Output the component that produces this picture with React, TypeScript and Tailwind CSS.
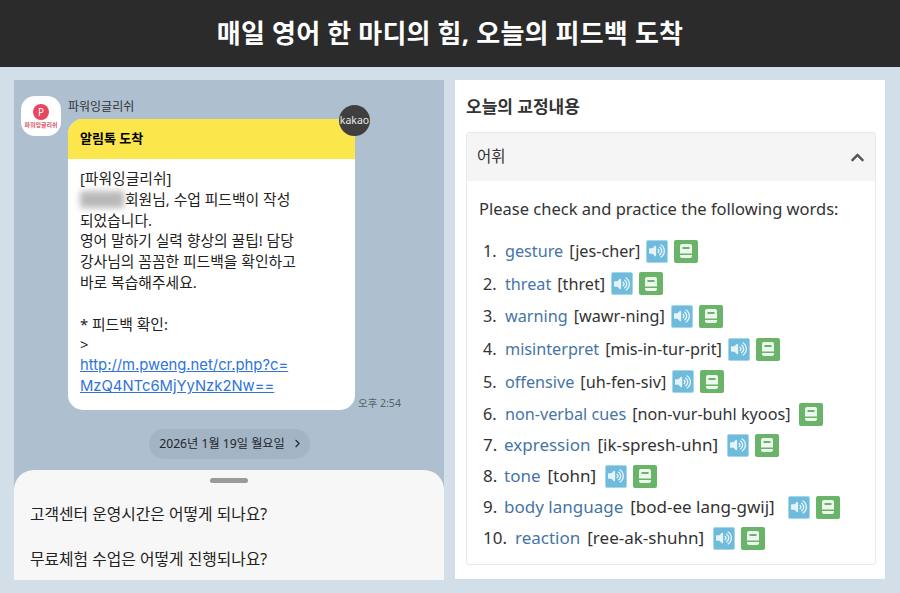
import { FaVolumeUp, FaChevronUp } from "react-icons/fa";
import { ChevronRight } from "lucide-react";

const KR = "font-['Noto_Sans','Noto_Sans_CJK_KR',sans-serif]";

interface IWord {
  word: string;
  reading: string;
  numberWidth: string;
}

const firstWords: IWord[] = [
  { word: "gesture", reading: "[jes-cher]", numberWidth: "w-[22px]" },
  { word: "threat", reading: "[thret]", numberWidth: "w-[22px]" },
  { word: "warning", reading: "[wawr-ning]", numberWidth: "w-[22px]" },
  { word: "misinterpret", reading: "[mis-in-tur-prit]", numberWidth: "w-[22px]" },
  { word: "offensive", reading: "[uh-fen-siv]", numberWidth: "w-[22px]" },
  { word: "non-verbal cues", reading: "[non-vur-buhl kyoos]", numberWidth: "w-[22px]" },
];

const secondWords: IWord[] = [
  { word: "expression", reading: "[ik-spresh-uhn]", numberWidth: "w-[21px]" },
  { word: "tone", reading: "[tohn]", numberWidth: "w-[21px]" },
  { word: "body language", reading: "[bod-ee lang-gwij]", numberWidth: "w-[21px]" },
  { word: "reaction", reading: "[ree-ak-shuhn]", numberWidth: "w-[32px]" },
];

function BookIcon() {
  return (
    <svg width="12" height="14" viewBox="0 0 12 14" fill="none">
      <rect x="0" y="0" width="12" height="14" rx="2" fill="#eef7ee" />
      <rect x="2.5" y="3" width="7" height="2" fill="#6ab469" />
      <rect x="0" y="9.5" width="12" height="1.5" fill="#6ab469" />
    </svg>
  );
}

function SoundButton({ className }: { className: string }) {
  return (
    <span
      className={`${className} flex h-[23px] w-[22px] items-center justify-center rounded-[2px] border border-[#a6d6ea] bg-[#6fbbdc] text-[#e6f4fa]`}
    >
      <FaVolumeUp size={16} />
    </span>
  );
}

function FirstRow({ item, index }: { item: IWord; index: number }) {
  const noSound = item.word === "non-verbal cues";
  return (
    <li className="flex h-[32.6px] items-center text-[16.2px]">
      <span className={`${item.numberWidth} shrink-0`}>{index}.</span>
      <span className="text-[#4674a6]">{item.word}</span>
      <span className="ml-[6px]">{item.reading}</span>
      {!noSound && <SoundButton className="ml-[6px]" />}
      <span
        className={`${noSound ? "ml-[8px]" : "ml-[6px]"} flex h-[23px] w-[24px] items-center justify-center rounded-[2px] bg-[#6ab469]`}
      >
        <BookIcon />
      </span>
    </li>
  );
}

function SecondRow({ item, index }: { item: IWord; index: number }) {
  return (
    <li className="flex h-[31px] items-center text-[17px]">
      <span className={`${item.numberWidth} shrink-0`}>{index}.</span>
      <span className="text-[#4674a6]">{item.word}</span>
      <span className="ml-[7px]">{item.reading}</span>
      <SoundButton className={item.word === "body language" ? "ml-[13px]" : "ml-[9px]"} />
      <span className="ml-[6px] flex h-[23px] w-[24px] items-center justify-center rounded-[2px] bg-[#6ab469]">
        <BookIcon />
      </span>
    </li>
  );
}

function ChatPanel() {
  return (
    <section className="relative flex h-[500px] w-[430px] flex-col overflow-hidden bg-[#aec0cf]">
      <div className="relative flex flex-1 flex-col">
        <div className="flex pl-[7px] pt-[16px]">
          <div className="flex h-[40px] w-[40px] flex-col items-center justify-center rounded-[14px] bg-white">
            <span className="flex h-[16px] w-[16px] items-center justify-center rounded-full bg-[#e8455f] text-[10px] leading-none text-white">
              P
            </span>
            <span className="mt-[2px] text-[6px] font-bold leading-none text-[#d8566c]">파워잉글리쉬</span>
          </div>
          <div className="ml-[7px]">
            <div className="h-[23px] text-[12px] leading-[22px] text-[#2f3338]">파워잉글리쉬</div>
            <div className="flex items-end">
              <div className="w-[287px] overflow-hidden rounded-[15px] bg-white">
                <div className="flex h-[40px] items-center bg-[#fbe64c] pl-[12px] text-[13px] font-bold text-black">
                  알림톡 도착
                </div>
                <div className="px-[12px] pt-[9px] pb-[13px] text-[14.8px] leading-[20.8px] text-[#222]">
                  <div>[파워잉글리쉬]</div>
                  <div className="flex items-center">
                    <span className="mr-[1px] h-[17px] w-[44px] bg-[#9b9b9b] opacity-70 blur-[3px]" />
                    회원님, 수업 피드백이 작성
                  </div>
                  <div>되었습니다.</div>
                  <div>영어 말하기 실력 향상의 꿀팁! 담당</div>
                  <div>강사님의 꼼꼼한 피드백을 확인하고</div>
                  <div>바로 복습해주세요.</div>
                  <div className="h-[20.8px]" />
                  <div>* 피드백 확인:</div>
                  <div>&gt;</div>
                  <div className="font-['Inter',sans-serif] text-[#2f74d8] underline">http://m.pweng.net/cr.php?c=</div>
                  <div className="font-['Inter',sans-serif] text-[#2f74d8] underline">MzQ4NTc6MjYyNzk2Nw==</div>
                </div>
              </div>
              <span className="ml-[3px] text-[10.5px] leading-[14px] text-[#555f68]">오후 2:54</span>
            </div>
          </div>
        </div>
        <div className="mt-[19px] flex justify-center">
          <div className="flex h-[30px] w-[161px] items-center justify-center gap-[6px] rounded-full bg-[#a3b5c4] pl-[5px] text-[12.2px] text-[#22262a]">
            2026년 1월 19일 월요일
            <ChevronRight size={13} />
          </div>
        </div>
      </div>
      <div className="absolute left-[325px] top-[25px] flex h-[31px] w-[31px] items-center justify-center rounded-full bg-[#3f3f3f] text-[10.5px] text-[#e8e8e8]">
        kakao
      </div>
      <div className="h-[110px] rounded-t-[20px] bg-[#f7f7f7] pl-[16px]">
        <div className="ml-[180px] mt-[8px] h-[5px] w-[38px] rounded-full bg-[#9a9a9a]" />
        <div className="mt-[19px] text-[15.8px] leading-[24px] text-[#222]">고객센터 운영시간은 어떻게 되나요?</div>
        <div className="mt-[21px] text-[15.8px] leading-[24px] text-[#222]">무료체험 수업은 어떻게 진행되나요?</div>
      </div>
    </section>
  );
}

function FeedbackPanel() {
  return (
    <section className="h-[499px] w-[430px] bg-white pl-[11px] pr-[9px]">
      <h2 className="flex h-[52px] items-center pt-[2px] text-[17px] font-bold text-[#333]">오늘의 교정내용</h2>
      <div className="h-[433px] rounded-[3px] border border-[#e8e8e8]">
        <div className="flex h-[48px] items-center justify-between bg-[#f5f5f5] pl-[10px] pr-[10px] text-[15.5px] text-[#333]">
          어휘
          <FaChevronUp size={15} className="text-[#555]" />
        </div>
        <div className="pl-[12px] text-[16.5px] text-[#333]">
          <p className="flex h-[56px] items-center">Please check and practice the following words:</p>
          <ol className="-mt-[2px] pl-[4px]">
            {firstWords.map((item, i) => (
              <FirstRow key={item.word} item={item} index={i + 1} />
            ))}
          </ol>
          <ol className="-mt-[1px] pl-[4px]">
            {secondWords.map((item, i) => (
              <SecondRow key={item.word} item={item} index={i + 7} />
            ))}
          </ol>
        </div>
      </div>
    </section>
  );
}

export default function App() {
  return (
    <div className={`${KR} h-[593px] w-[900px] overflow-hidden bg-[#d3dfe8]`}>
      <header className="flex h-[67px] items-center justify-center bg-[#2b2b2b] text-[26px] font-bold tracking-[0.2px] text-white">
        매일 영어 한 마디의 힘, 오늘의 피드백 도착
      </header>
      <main className="flex gap-[11px] pl-[14px] pt-[13px]">
        <ChatPanel />
        <FeedbackPanel />
      </main>
    </div>
  );
}
